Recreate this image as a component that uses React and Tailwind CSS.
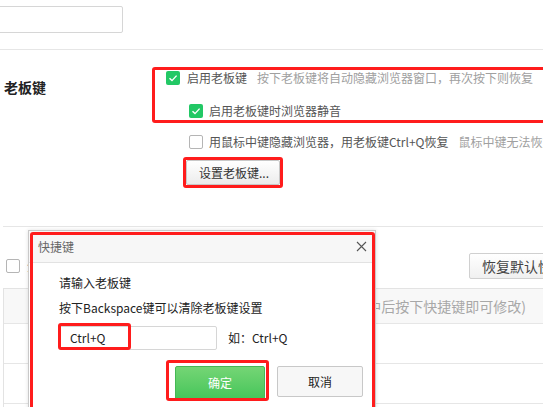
import React from 'react';

const Check = ({ checked }) => (
  <span
    className={
      checked
        ? 'flex h-[14px] w-[14px] shrink-0 items-center justify-center rounded-[2px] bg-[#22c865]'
        : 'flex h-[14px] w-[14px] shrink-0 rounded-[2px] border border-[#b5b5b5] bg-white'
    }
  >
    {checked && (
      <svg width="10" height="10" viewBox="0 0 10 10" fill="none">
        <path d="M1.5 5.2 L4 7.6 L8.6 2.6" stroke="#fff" strokeWidth="1.4" />
      </svg>
    )}
  </span>
);

const RedBox = ({ className }) => (
  <div className={`pointer-events-none absolute rounded-[3px] border-[3px] border-[#ff1c1c] ${className}`} />
);

const App = () => {
  return (
    <div className="relative h-[407px] w-[543px] overflow-hidden bg-white font-['Noto_Sans_CJK_SC',sans-serif] text-[12px] text-[#333]">
      {/* top search-ish input */}
      <div className="pt-[6px]">
        <div className="-ml-[8px] h-[27px] w-[131px] rounded-[2px] border border-[#d6d6d6] bg-white" />
      </div>
      <div className="mt-[16px] h-px bg-[#e6e6e6]" />

      {/* boss key section */}
      <div className="flex h-[176px]">
        <div className="w-[166px] shrink-0 pl-[4px] pt-[27px] text-[14px] font-bold leading-[20px] text-[#222]">老板键</div>
        <div className="flex shrink-0 flex-col pt-[21px]">
          <div className="flex h-[14px] items-center">
            <Check checked />
            <span className="ml-[7px] leading-[14px] text-[#555]">启用老板键</span>
            <span className="ml-[10px] whitespace-nowrap leading-[14px] text-[#a0a0a0]">按下老板键将自动隐藏浏览器窗口，再次按下则恢复</span>
          </div>
          <div className="ml-[23px] mt-[19px] flex h-[14px] items-center">
            <Check checked />
            <span className="ml-[6px] leading-[14px] text-[#555]">启用老板键时浏览器静音</span>
          </div>
          <div className="ml-[23px] mt-[17px] flex h-[14px] items-center whitespace-nowrap">
            <Check />
            <span className="ml-[6px] leading-[14px] text-[#555]">用鼠标中键隐藏浏览器，用老板键Ctrl+Q恢复</span>
            <span className="ml-[10px] leading-[14px] text-[#a0a0a0]">鼠标中键无法恢复</span>
          </div>
          <button className="ml-[20px] mt-[11px] h-[25px] w-[94px] rounded-[2px] border border-[#c8c8c8] bg-gradient-to-b from-white to-[#ececec] pl-[12px] text-left text-[12px] leading-[23px] text-[#333]">
            设置老板键...
          </button>
        </div>
      </div>
      <div className="ml-[3px] h-px bg-[#e6e6e6]" />

      {/* shortcut list section */}
      <div className="flex items-center justify-between pt-[26px]">
        <div className="flex items-center pl-[6px]">
          <Check />
          <span className="ml-[7px] text-[#555]">全选</span>
        </div>
        <button className="-mr-[40px] h-[26px] w-[114px] shrink-0 whitespace-nowrap rounded-[2px] border border-[#d0d0d0] bg-gradient-to-b from-white to-[#f0f0f0] pl-[12px] text-left text-[14px] text-[#444]">
          恢复默认快捷键
        </button>
      </div>
      <div className="ml-[3px] mt-[9px] border-l border-t border-[#e3e3e3]">
        <div className="flex h-[34px] items-center justify-end whitespace-nowrap bg-[#f8f8f8] pr-[17px] text-[14px] text-[#a8a8a8]">
          (选中后按下快捷键即可修改)
        </div>
        <div className="h-[40px] border-t border-[#e6e6e6]" />
        <div className="h-[40px] border-t border-[#e6e6e6]" />
        <div className="h-[40px] border-t border-[#e6e6e6]" />
      </div>

      {/* dialog */}
      <div className="absolute left-[28px] top-[230px] h-[190px] w-[348px] border border-[#c9c9c9] bg-white shadow-[0_0_4px_rgba(0,0,0,0.12)]">
        <div className="flex h-[32px] items-center justify-between border-b border-[#e2e2e2] bg-[#f7f7f7] pl-[9px] pr-[8px]">
          <span className="text-[12px] text-[#666]">快捷键</span>
          <svg width="11" height="11" viewBox="0 0 11 11">
            <path d="M1 1 L10 10 M10 1 L1 10" stroke="#555" strokeWidth="1.1" />
          </svg>
        </div>
        <div className="pl-[30px] pr-[12px] pt-[10px]">
          <div className="leading-[20px] text-[#222]">请输入老板键</div>
          <div className="mt-[5px] leading-[20px] text-[#222]">按下Backspace键可以清除老板键设置</div>
          <div className="mt-[8px] flex items-center">
            <div className="flex h-[24px] w-[158px] items-center rounded-[2px] border border-[#d6d6d6] pl-[10px] text-[12px] text-[#222]">Ctrl+Q</div>
            <span className="ml-[11px] text-[#222]">如：Ctrl+Q</span>
          </div>
          <div className="mt-[16px] flex items-start justify-end">
            <button className="h-[34px] w-[90px] rounded-[2px] border border-[#45b854] bg-gradient-to-b from-[#74d575] to-[#43c55a] text-[12px] text-white">
              确定
            </button>
            <button className="ml-[12px] h-[31px] w-[86px] rounded-[2px] border border-[#c8c8c8] bg-[#f7f7f7] text-[12px] text-[#222]">
              取消
            </button>
          </div>
        </div>
      </div>

      {/* annotation boxes */}
      <RedBox className="left-[152px] top-[67px] h-[56px] w-[400px]" />
      <RedBox className="left-[183px] top-[157px] h-[31px] w-[100px]" />
      <RedBox className="left-[30px] top-[232px] h-[190px] w-[345px]" />
      <RedBox className="left-[58px] top-[323px] h-[27px] w-[73px]" />
      <RedBox className="left-[166px] top-[360px] h-[41px] w-[103px]" />
    </div>
  );
};

export default App;
